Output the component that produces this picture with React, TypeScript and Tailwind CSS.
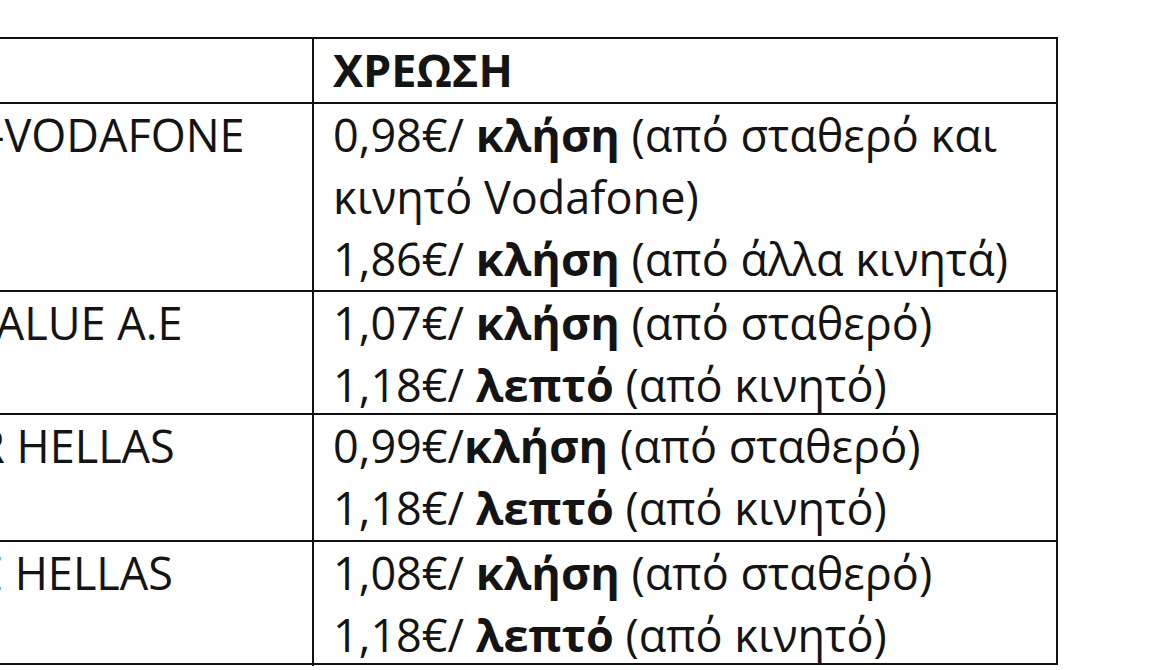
import React from "react";

const font = { fontFamily: '"Open Sans", "Noto Sans", "DejaVu Sans", sans-serif' };

function B({ children }: { children: React.ReactNode }) {
  return <span className="font-bold">{children}</span>;
}

function Line({ children }: { children: React.ReactNode }) {
  return <div className="whitespace-nowrap">{children}</div>;
}

type Row = { left: string; leftPad: string; right: React.ReactNode; h: string };

const rows: Row[] = [
  {
    left: "-VODAFONE",
    leftPad: "pl-[28px]",
    h: "h-[188px]",
    right: (
      <>
        <Line>
          0,98€/ <B>κλήση</B> (από σταθερό και
        </Line>
        <Line>κινητό Vodafone)</Line>
        <Line>
          1,86€/ <B>κλήση</B> (από άλλα κινητά)
        </Line>
      </>
    ),
  },
  {
    left: "VALUE A.E",
    leftPad: "pl-[7px]",
    h: "h-[123px]",
    right: (
      <>
        <Line>
          1,07€/ <B>κλήση</B> (από σταθερό)
        </Line>
        <Line>
          1,18€/ <B>λεπτό</B> (από κινητό)
        </Line>
      </>
    ),
  },
  {
    left: "R HELLAS",
    leftPad: "pl-[15px]",
    h: "h-[127px]",
    right: (
      <>
        <Line>
          0,99€/<B>κλήση</B> (από σταθερό)
        </Line>
        <Line>
          1,18€/ <B>λεπτό</B> (από κινητό)
        </Line>
      </>
    ),
  },
  {
    left: "E HELLAS",
    leftPad: "pl-[16px]",
    h: "h-[121px]",
    right: (
      <>
        <Line>
          1,08€/ <B>κλήση</B> (από σταθερό)
        </Line>
        <Line>
          1,18€/ <B>λεπτό</B> (από κινητό)
        </Line>
      </>
    ),
  },
];

export default function App() {
  return (
    <div
      className="w-[1160px] h-[670px] overflow-hidden bg-white text-[#141414] text-[45px] leading-[62px]"
      style={font}
    >
      <div className="mt-[37px] ml-[-40px] w-[1098px] border-2 border-[#111]">
        <div className="grid grid-cols-[352px_742px] h-[65px] border-b-2 border-[#111]">
          <div className="border-r-2 border-[#111]" />
          <div className="pl-[19px] font-bold">ΧΡΕΩΣΗ</div>
        </div>
        {rows.map((r, i) => (
          <div
            key={i}
            className={`grid grid-cols-[352px_742px] ${r.h} ${i < rows.length - 1 ? "border-b-2 border-[#111]" : ""}`}
          >
            <div className={`border-r-2 border-[#111] whitespace-nowrap overflow-hidden ${r.leftPad}`}>{r.left}</div>
            <div className="pl-[19px]">{r.right}</div>
          </div>
        ))}
      </div>
    </div>
  );
}
